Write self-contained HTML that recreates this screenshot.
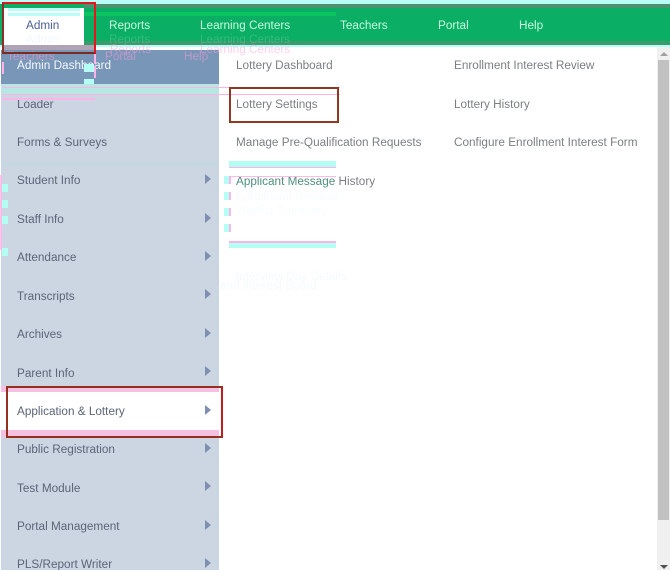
<!DOCTYPE html>
<html>
<head>
<meta charset="utf-8">
<style>
html,body{margin:0;padding:0;background:#fff;}
#p{position:relative;width:670px;height:570px;overflow:hidden;background:#fff;font-family:"Liberation Sans",sans-serif;font-size:11.75px;}
#p div{position:absolute;}
.t{white-space:nowrap;line-height:16px;transform:translateY(1px);}
.n{color:#c8fbe0;top:17px;}
.s{color:#5b6577;left:17px;}
.m{color:#7b7f85;}
.a{width:0;height:0;border-left:6px solid #7f8fb0;border-top:5px solid transparent;border-bottom:5px solid transparent;left:205px;}
.c{background:#b3fff4;}
.k{background:#ffb3e6;}
.g{white-space:nowrap;line-height:14px;opacity:.2;}
</style>
</head>
<body>
<div id="p">
<div style="left:0;top:0;width:670px;height:4px;background:#b8fdf8;"></div>
<div style="left:0;top:4px;width:670px;height:42px;background:#0aae64;"></div>
<div style="left:84px;top:4px;width:586px;height:4px;background:#4a9270;"></div>
<div style="left:84px;top:12px;width:252px;height:4px;background:#0ac462;"></div>
<div style="left:0;top:41px;width:670px;height:4px;background:#3d9a6c;"></div>
<div style="left:0;top:45px;width:670px;height:2px;background:#b8fdf8;"></div>

<div style="left:3px;top:8px;width:81px;height:38px;background:#fff;"></div>
<div style="left:8px;top:8px;width:72px;height:3px;background:#b8fdf8;"></div>
<div style="left:8px;top:13px;width:72px;height:3px;background:#b8fdf8;"></div>

<div class="t n" style="left:26px;color:#4d6096;">Admin</div>
<div class="t n" style="left:109px;">Reports</div>
<div class="t n" style="left:200px;">Learning Centers</div>
<div class="t n" style="left:340px;">Teachers</div>
<div class="t n" style="left:438px;">Portal</div>
<div class="t n" style="left:519px;">Help</div>

<div style="left:3px;top:45px;width:92px;height:5px;background:#b0a4b4;"></div>
<div style="left:1px;top:50px;width:218px;height:520px;background:#ccd6e3;"></div>
<div style="left:1px;top:50px;width:218px;height:34px;background:#7896b8;"></div>
<div style="left:1px;top:84px;width:218px;height:10px;background:#b8e6e2;"></div>
<div style="left:1px;top:162px;width:218px;height:4px;background:#c4d8e2;"></div>

<div class="g" style="left:26px;top:33px;color:#c8d4f0;">Admin</div>
<div class="g" style="left:109px;top:33px;color:#cfeedd;">Reports</div>
<div class="g" style="left:200px;top:33px;color:#cfeedd;">Learning Centers</div>
<div class="g" style="left:7px;top:50px;color:#ff9fd8;opacity:.5;">Teachers</div>
<div class="g" style="left:105px;top:50px;color:#ff9fd8;opacity:.5;">Portal</div>
<div class="g" style="left:184px;top:50px;color:#ff9fd8;opacity:.5;">Help</div>
<div class="g" style="left:110px;top:43px;color:#ff9fd8;opacity:.5;">Reports</div>
<div class="g" style="left:200px;top:43px;color:#ff9fd8;opacity:.5;">Learning Centers</div>

<div class="t" style="left:17px;top:57px;color:#f4f7fb;">Admin Dashboard</div>
<div class="t s" style="top:96px;">Loader</div>
<div class="t s" style="top:134px;">Forms &amp; Surveys</div>
<div class="t s" style="top:172px;">Student Info</div>
<div class="t s" style="top:211px;">Staff Info</div>
<div class="t s" style="top:249px;">Attendance</div>
<div class="t s" style="top:288px;">Transcripts</div>
<div class="t s" style="top:326px;">Archives</div>
<div class="t s" style="top:365px;">Parent Info</div>
<div style="left:1px;top:386px;width:218px;height:51px;background:#fff;"></div>
<div style="left:1px;top:386px;width:218px;height:6px;background:#f6c0e2;"></div>
<div style="left:1px;top:430px;width:218px;height:7px;background:#f6c0e2;"></div>
<div class="t s" style="top:403px;">Application &amp; Lottery</div>
<div class="t s" style="top:441px;">Public Registration</div>
<div class="t s" style="top:480px;">Test Module</div>
<div class="t s" style="top:518px;">Portal Management</div>
<div class="t s" style="top:556px;">PLS/Report Writer</div>

<div class="a" style="top:174px;"></div>
<div class="a" style="top:213px;"></div>
<div class="a" style="top:251px;"></div>
<div class="a" style="top:289px;"></div>
<div class="a" style="top:328px;"></div>
<div class="a" style="top:366px;"></div>
<div class="a" style="top:405px;"></div>
<div class="a" style="top:443px;"></div>
<div class="a" style="top:481px;"></div>
<div class="a" style="top:520px;"></div>
<div class="a" style="top:558px;"></div>

<div class="t m" style="left:236px;top:57px;">Lottery Dashboard</div>
<div class="t m" style="left:236px;top:96px;">Lottery Settings</div>
<div class="t m" style="left:236px;top:134px;">Manage Pre-Qualification Requests</div>
<div class="t m" style="left:236px;top:173px;"><span style="color:#4f9080;">Applicant Message</span> History</div>
<div class="t m" style="left:454px;top:57px;">Enrollment Interest Review</div>
<div class="t m" style="left:454px;top:96px;">Lottery History</div>
<div class="t m" style="left:454px;top:134px;">Configure Enrollment Interest Form</div>

<div class="g" style="left:236px;top:190px;color:#dcf2fb;">Enrollment Reviews</div>
<div class="g" style="left:236px;top:204px;color:#dcf2fb;">Waitlist Summary</div>
<div class="g" style="left:236px;top:270px;color:#cfe8f8;">Interview Day Details</div>
<div class="g" style="left:220px;top:279px;color:#cfe8f8;">and Interest Board</div>

<div class="c" style="left:229px;top:161px;width:107px;height:6px;"></div>
<div class="k" style="left:229px;top:167px;width:107px;height:1px;"></div>
<div class="k" style="left:229px;top:176px;width:107px;height:1px;opacity:.9;"></div>
<div class="c" style="left:224px;top:176px;width:5px;height:8px;"></div>
<div class="k" style="left:229px;top:176px;width:2px;height:8px;"></div>
<div class="c" style="left:224px;top:192px;width:5px;height:8px;"></div>
<div class="k" style="left:229px;top:192px;width:2px;height:8px;"></div>
<div class="c" style="left:224px;top:208px;width:5px;height:8px;"></div>
<div class="k" style="left:229px;top:208px;width:2px;height:8px;"></div>
<div class="c" style="left:224px;top:224px;width:5px;height:8px;"></div>
<div class="k" style="left:229px;top:224px;width:2px;height:8px;"></div>
<div class="k" style="left:229px;top:241px;width:107px;height:2px;"></div>
<div class="c" style="left:229px;top:243px;width:107px;height:5px;"></div>

<div class="k" style="left:2px;top:87px;width:338px;height:1px;"></div>
<div class="k" style="left:2px;top:94px;width:338px;height:1px;"></div>
<div class="k" style="left:2px;top:98px;width:93px;height:2px;"></div>
<div class="c" style="left:84px;top:64px;width:10px;height:8px;"></div>
<div class="k" style="left:94px;top:52px;width:2px;height:12px;"></div>
<div class="k" style="left:94px;top:66px;width:2px;height:12px;"></div>
<div class="k" style="left:2px;top:62px;width:2px;height:12px;"></div>
<div class="c" style="left:84px;top:79px;width:10px;height:5px;"></div>
<div class="k" style="left:0;top:175px;width:2px;height:75px;opacity:.8;"></div>
<div class="c" style="left:2px;top:184px;width:6px;height:8px;"></div>
<div class="c" style="left:2px;top:200px;width:6px;height:8px;"></div>
<div class="c" style="left:2px;top:216px;width:6px;height:8px;"></div>
<div class="c" style="left:2px;top:248px;width:6px;height:8px;"></div>

<div style="left:2px;top:2px;width:90px;height:48px;border:2px solid #e8141c;border-left-color:#8a3028;border-bottom-color:#7a2a20;"></div>
<div style="left:229px;top:87px;width:106px;height:32px;border:2px solid #8e3a22;"></div>
<div style="left:6px;top:386px;width:213px;height:48px;border:2px solid #93301f;border-right-color:#c01c1c;"></div>

<div style="left:657px;top:47px;width:13px;height:523px;background:#f0f0f0;"></div>
<div style="left:658px;top:60px;width:11px;height:460px;background:#c1c1c1;"></div>
<div style="left:660px;top:52px;width:0;height:0;border-left:4px solid transparent;border-right:4px solid transparent;border-bottom:4px solid #a0a0a0;"></div>
<div style="left:660px;top:565px;width:0;height:0;border-left:4px solid transparent;border-right:4px solid transparent;border-top:4px solid #505050;"></div>
</div>
</body>
</html>
